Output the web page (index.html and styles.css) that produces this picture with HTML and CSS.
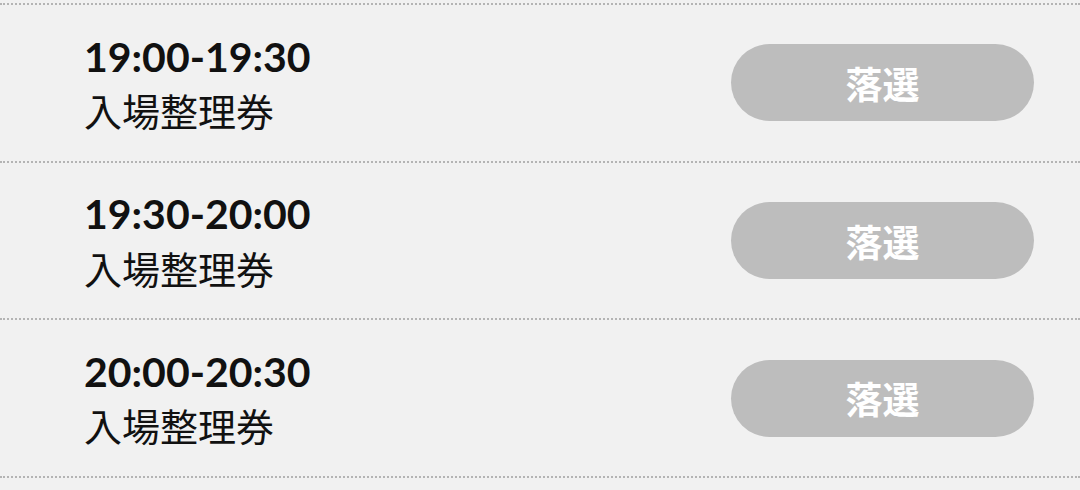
FILE: index.html
```html
<!DOCTYPE html>
<html lang="ja">
<head>
    <meta charset="UTF-8">
    <meta name="viewport" content="width=device-width, initial-scale=1.0">
    <title>抽選結果</title>
    <link rel="stylesheet" href="styles.css">
</head>
<body>
    <ul class="ticket-list">
        <li class="ticket">
            <div class="ticket-info">
                <div class="ticket-time">19:00-19:30</div>
                <div class="ticket-name">入場整理券</div>
            </div>
            <span class="result-btn">落選</span>
        </li>
        <li class="ticket">
            <div class="ticket-info">
                <div class="ticket-time">19:30-20:00</div>
                <div class="ticket-name">入場整理券</div>
            </div>
            <span class="result-btn">落選</span>
        </li>
        <li class="ticket">
            <div class="ticket-info">
                <div class="ticket-time">20:00-20:30</div>
                <div class="ticket-name">入場整理券</div>
            </div>
            <span class="result-btn">落選</span>
        </li>
    </ul>
</body>
</html>
```

FILE: styles.css
```css
body {
    margin: 0;
    padding: 0;
    background-color: #f1f1f1;
    font-family: "Lato", "Noto Sans CJK JP", sans-serif;
    color: #111;
}
.ticket-list {
    list-style: none;
    margin: 3px 0 0;
    padding: 0;
    border-top: 2px dotted #b4b4b4;
}
.ticket {
    display: flex;
    align-items: center;
    justify-content: space-between;
    height: 155.7px;
    padding: 0 46px 0 84px;
    border-bottom: 2px dotted #b4b4b4;
}
.ticket-time {
    font-size: 41px;
    font-weight: 700;
    line-height: 1.3;
}
.ticket-name {
    font-size: 38px;
    line-height: 1.4;
    font-family: "Noto Sans CJK JP", sans-serif;
}
.result-btn {
    display: flex;
    align-items: center;
    justify-content: center;
    width: 303px;
    height: 77px;
    border-radius: 39px;
    background-color: #bdbdbd;
    color: #fff;
    font-family: "Noto Sans CJK JP", sans-serif;
    font-weight: 700;
    font-size: 37px;
}
```
